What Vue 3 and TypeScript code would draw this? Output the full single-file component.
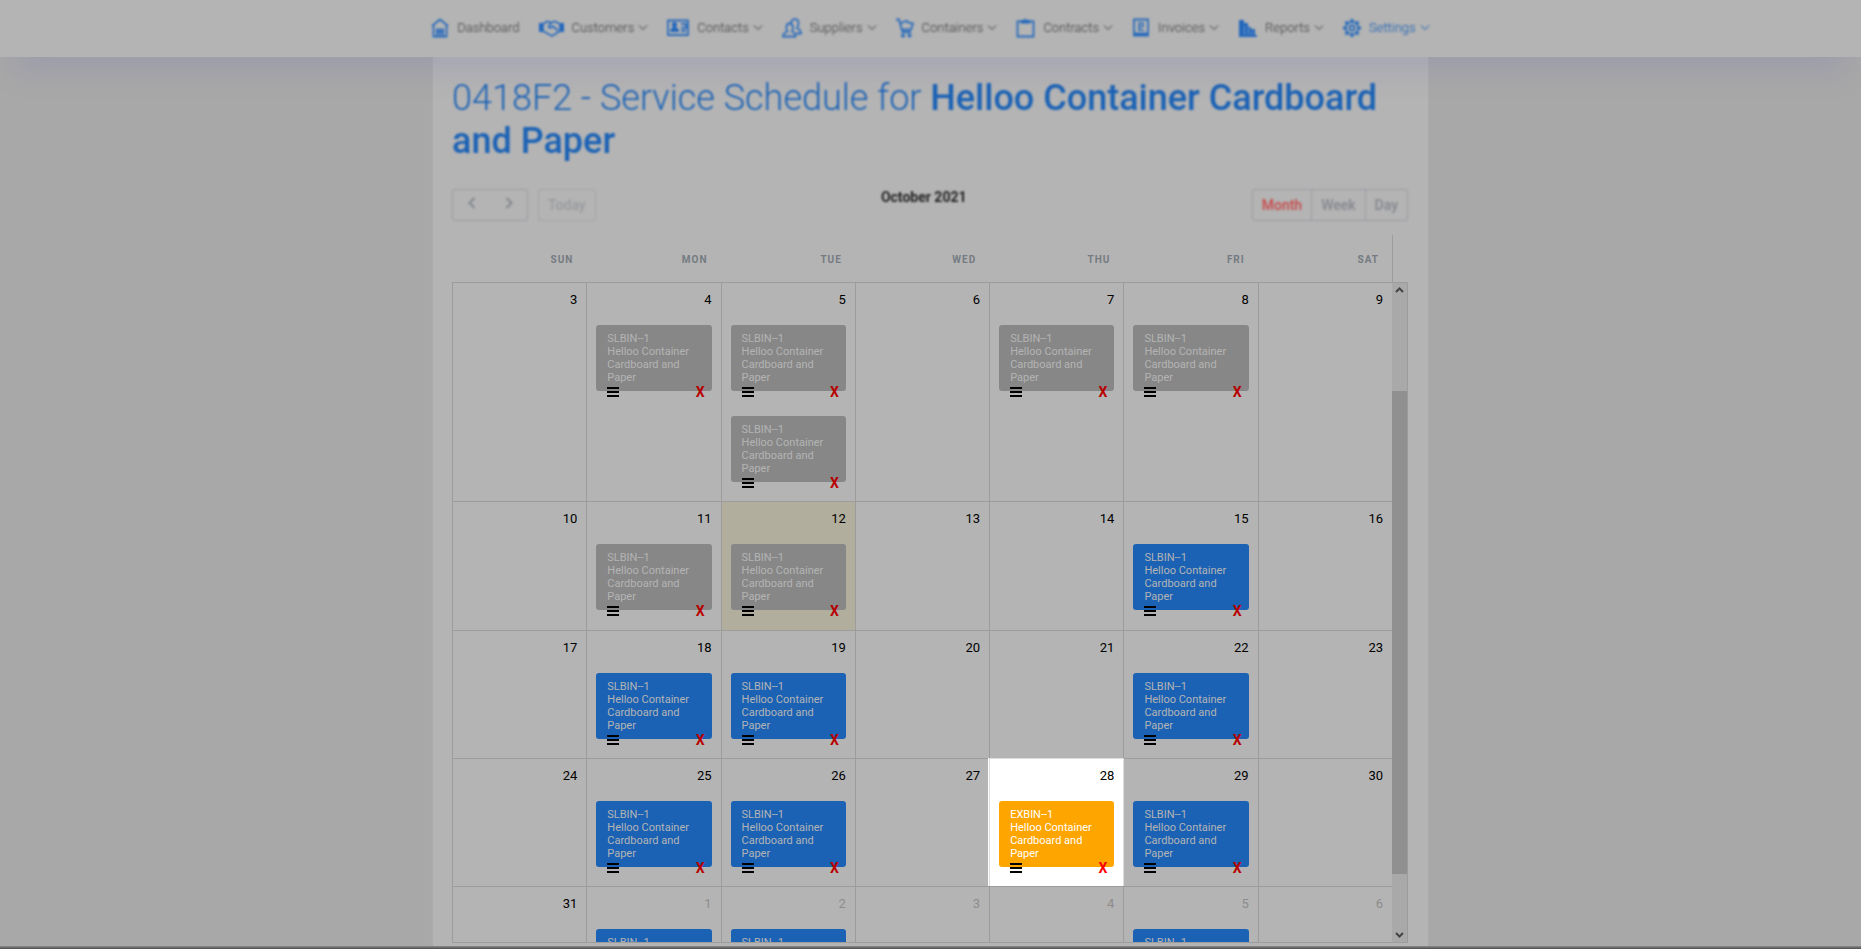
<script setup lang="ts">
interface NavItem { label: string; icon: string; menu: boolean; active?: boolean }
type Tone = 'past' | 'planned' | 'extra'
interface Day { num: number; events: Tone[]; today?: boolean; focus?: boolean; other?: boolean }

const nav: NavItem[] = [
  { label: 'Dashboard', icon: 'home', menu: false },
  { label: 'Customers', icon: 'hands', menu: true },
  { label: 'Contacts', icon: 'card', menu: true },
  { label: 'Suppliers', icon: 'people', menu: true },
  { label: 'Containers', icon: 'cart', menu: true },
  { label: 'Contracts', icon: 'clip', menu: true },
  { label: 'Invoices', icon: 'invoice', menu: true },
  { label: 'Reports', icon: 'chart', menu: true },
  { label: 'Settings', icon: 'gear', menu: true, active: true },
]

const weekdays = ['Sun', 'Mon', 'Tue', 'Wed', 'Thu', 'Fri', 'Sat']
const views = ['Month', 'Week', 'Day']

const day = (num: number, events: Tone[] = [], extra: Partial<Day> = {}): Day => ({ num, events, ...extra })
const other = { other: true }

const weeks: Day[][] = [
  [day(3), day(4, ['past']), day(5, ['past', 'past']), day(6), day(7, ['past']), day(8, ['past']), day(9)],
  [day(10), day(11, ['past']), day(12, ['past'], { today: true }), day(13), day(14), day(15, ['planned']), day(16)],
  [day(17), day(18, ['planned']), day(19, ['planned']), day(20), day(21), day(22, ['planned']), day(23)],
  [day(24), day(25, ['planned']), day(26, ['planned']), day(27), day(28, ['extra'], { focus: true }), day(29, ['planned']), day(30)],
  [day(31), day(1, ['planned'], other), day(2, ['planned'], other), day(3, [], other), day(4, [], other), day(5, ['planned'], other), day(6, [], other)],
]

const code = (tone: Tone): string => (tone === 'extra' ? 'EXBIN--1' : 'SLBIN--1')
</script>

<template>
  <div class="page">
    <header class="topbar">
      <nav class="menu">
        <a v-for="item in nav" :key="item.label" href="#" class="link" :class="{ active: item.active }">
          <svg v-if="item.icon === 'home'" class="icon" width="18" height="20" viewBox="0 0 18 20">
            <path d="M1 8 9 1.500 17 8M2.500 7v11.500h13V7M6 18.500v-7h6v7M6 14h6M9 14v4" />
          </svg>
          <svg v-else-if="item.icon === 'hands'" class="icon" width="25" height="20" viewBox="0 0 25 20">
            <path class="solid" d="M0 5h4v9H0zM21 5h4v9h-4z" />
            <path d="M4 6l4-2.500 4 1 4-1 5 2.500v7l-8 5-9-5zM12 5 9.500 9c1 1.500 3 1 4.500-.8l5 4.300" />
          </svg>
          <svg v-else-if="item.icon === 'card'" class="icon" width="22" height="20" viewBox="0 0 22 20">
            <path d="M1 2.500h20v14.500H1z" />
            <path class="solid" d="M3 14c0-3 1.500-4 3-4.500C4 7 5 4 7.500 4S11 7 9 9.500c2 .5 3 1.500 3 4.500z" />
            <path d="M14 6h5v4h-5M14 13h5" />
          </svg>
          <svg v-else-if="item.icon === 'people'" class="icon" width="20" height="20" viewBox="0 0 20 20">
            <path d="M1 18.500c0-3 1.500-4 4.500-5C3.500 10 4 5.500 7.500 5.500S12 10 10 13.500c2.500 1 3.500 2 3.500 5zM9 5c.5-3 2-3.800 4-3.800 4 0 4.500 5 2 8.800 3 1.500 4 2.500 4 5.500h-5" />
          </svg>
          <svg v-else-if="item.icon === 'cart'" class="icon" width="18" height="20" viewBox="0 0 18 20">
            <path d="M0 1.500h3L6.500 14H15M4 6l4-2.500 3-.5 2 2 4 .5-2 6H6" />
            <circle cx="7" cy="17.500" r="1.200" /><circle cx="13.500" cy="17.500" r="1.200" />
          </svg>
          <svg v-else-if="item.icon === 'clip'" class="icon" width="19" height="20" viewBox="0 0 19 20">
            <path d="M1.500 3.500h16v15h-16z" /><path class="solid" d="M5 2h3l1.500-1.500L11 2h3v3.500H5z" />
          </svg>
          <svg v-else-if="item.icon === 'invoice'" class="icon" width="18" height="20" viewBox="0 0 18 20">
            <path d="M2 1.500h14v16H2zM2 15.500h14" /><path class="fine" d="M7 12V5h4v3.500H7M6 12h6" />
          </svg>
          <svg v-else-if="item.icon === 'chart'" class="icon" width="19" height="20" viewBox="0 0 19 20">
            <path class="solid" d="M1 2h5v3h4v4h3v2h4v6h2v2H1z" /><path class="gap" d="M6.500 8v9M10.500 10v7M14 13v4" />
          </svg>
          <svg v-else class="icon" width="18" height="20" viewBox="0 0 18 20">
            <circle cx="9" cy="10" r="6.200" /><circle cx="9" cy="10" r="2.500" />
            <path class="thick" d="M9 1v3M9 16v3M0 10h3M15 10h3M2.600 3.600l2 2M13.400 14.400l2 2M15.400 3.600l-2 2M4.600 14.400l-2 2" />
          </svg>
          <span>{{ item.label }}</span>
          <svg v-if="item.menu" class="chevron" width="10" height="8" viewBox="0 0 10 8"><path d="M1 1.500 5 5.500 9 1.500" /></svg>
        </a>
      </nav>
    </header>

    <main class="panel">
      <div class="heading">
        <h1>0418F2 - Service Schedule for <strong>Helloo Container Cardboard and Paper</strong></h1>
        <div class="toolbar">
          <div class="left">
            <div class="group arrows">
              <button type="button" aria-label="Previous"><svg width="8" height="12" viewBox="0 0 8 12"><path d="M6.500 1 1.500 6l5 5" /></svg></button>
              <button type="button" aria-label="Next"><svg width="8" height="12" viewBox="0 0 8 12"><path d="M1.500 1l5 5-5 5" /></svg></button>
            </div>
            <button type="button" class="today-btn" disabled>Today</button>
          </div>
          <h2>October 2021</h2>
          <div class="group views">
            <button v-for="(view, i) in views" :key="view" type="button" :class="{ current: i === 0 }">{{ view }}</button>
          </div>
        </div>
      </div>

      <div class="weekdays">
        <span v-for="name in weekdays" :key="name">{{ name }}</span>
      </div>

      <div class="scroller">
        <div class="viewport">
          <table>
            <tbody>
              <tr v-for="(week, w) in weeks" :key="w">
                <td v-for="(d, i) in week" :key="i" :class="{ today: d.today, focus: d.focus, other: d.other }">
                  <div class="num">{{ d.num }}</div>
                  <div class="events">
                    <div v-for="(tone, e) in d.events" :key="e" class="event">
                      <div class="box" :class="tone">{{ code(tone) }}<br />Helloo Container Cardboard and Paper</div>
                      <div class="actions">
                        <button type="button" aria-label="Event menu">
                          <svg width="12" height="10" viewBox="0 0 12 10"><path d="M0 0h12v2H0zM0 4h12v2H0zM0 8h12v2H0z" /></svg>
                        </button>
                        <button type="button" class="remove">X</button>
                      </div>
                    </div>
                  </div>
                </td>
              </tr>
            </tbody>
          </table>
        </div>
        <div class="scrollbar">
          <svg width="15" height="16" viewBox="0 0 15 16"><path d="M4 9l3.500-3.500L11 9" /></svg>
          <div class="track"><div class="before"></div><div class="thumb"></div><div class="after"></div></div>
          <svg width="15" height="16" viewBox="0 0 15 16"><path d="M4 7l3.500 3.500L11 7" /></svg>
        </div>
      </div>
    </main>
    <div class="edge"></div>
  </div>
</template>

<style>
body { margin: 0; background: #a8a8a8; }
</style>

<style scoped>
* { box-sizing: border-box; }
.page {
  height: 100vh; display: flex; flex-direction: column; overflow: hidden;
  background: #a8a8a8; color: #000; font-family: Roboto, "Liberation Sans", sans-serif;
}
button { font: inherit; color: inherit; background: none; border: 0; padding: 0; margin: 0; display: flex; align-items: center; justify-content: center; }

.topbar {
  flex: none; height: 57px; background: #b4b4b4; position: relative; z-index: 2;
  display: flex; justify-content: center; box-shadow: 0 26px 30px -15px rgba(112, 112, 183, .26);
}
.menu { display: flex; align-items: center; gap: 19px; height: 55px; filter: blur(1px); }
.link { display: flex; align-items: center; color: #3c3c3c; font-size: 13px; line-height: 20px; font-weight: 300; text-decoration: none; }
.link.active { color: #0b58b5; }
.icon { margin-right: 8px; fill: none; stroke: #2a6cbc; stroke-width: 1.8; }
.icon .solid { fill: #2468bc; stroke: none; }
.icon .gap { stroke: #6f97c6; stroke-width: 1; }
.icon .fine { stroke-width: 1.5; }
.icon .thick { stroke-width: 3; }
.chevron { margin-left: 4px; fill: none; stroke: currentColor; stroke-width: 1; }

.panel {
  flex: 1; min-height: 0; width: calc(100% - 40px); max-width: 995px; margin: 0 auto; padding: 20px 20px 3px 19px;
  background: #b4b4b4; display: flex; flex-direction: column; box-shadow: 0 0 3px #b0b0b0;
}
.heading { filter: blur(1px); }
h1 { margin: 0; font-size: 36px; line-height: 43px; font-weight: 300; color: #1b62b5; }
h1 strong { font-weight: 500; }
.toolbar { display: flex; justify-content: space-between; margin-top: 26px; height: 46px; align-items: flex-start; font-size: 14px; font-weight: 500; color: #83878d; }
.left { display: flex; gap: 10px; }
.group { display: flex; height: 32px; border: 1px solid #9a9ca3; border-radius: 3px; }
.arrows button { width: 37px; }
.arrows svg { fill: none; stroke: #83878d; stroke-width: 2; margin-bottom: 4px; }
.today-btn { height: 32px; padding: 0 9px; border: 1px solid #a3a4a8; border-radius: 3px; color: #989a9e; }
.views button { padding: 0 9px; }
.views button + button { border-left: 1px solid #9a9ca3; }
.views .current { color: #c84848; }
h2 { margin: 0; font-size: 14px; line-height: 16px; font-weight: 700; color: #222; }

.weekdays {
  display: grid; grid-template-columns: repeat(7, 1fr); height: 47px; margin-right: 15px; padding-top: 2px; border-right: 1px solid #9c9c9c;
  align-items: center; text-align: right; text-transform: uppercase; font-size: 10px; line-height: 14px; font-weight: 700; letter-spacing: 1px; color: #757b82;
}
.weekdays span { padding-right: 13px; }

.scroller { flex: 1; min-height: 0; overflow: hidden; display: flex; align-items: stretch; border: solid #9c9c9c; border-width: 1px 1px 1px 0; }
.viewport { flex: 1; min-width: 0; overflow: hidden; }
table { width: 100%; border-collapse: separate; border-spacing: 0; table-layout: fixed; }
td { padding: 0; vertical-align: top; border-left: 1px solid #9c9c9c; }
tr + tr td { border-top: 1px solid #9c9c9c; }
.num { padding: 7px 9px 0 0; height: 42px; font-size: 13px; line-height: 20px; text-align: right; }
.other .num { color: #8c8c8c; }
.today { background: #b1ae9d; padding-bottom: 1px; }
.events { display: flex; flex-direction: column; gap: 6px; padding: 0 9px; }
.box { padding: 7px 11px; border-radius: 3px; font-size: 11px; line-height: 13px; color: #b4b4b4; }
.past { background: #878787; }
.planned { background: #1b62b5; }
.extra { background: #ffa500; color: #fff; }
.actions { display: flex; justify-content: space-between; height: 12px; margin: -5px 7px 12px 11px; }
.actions svg { display: block; fill: #000; }
.remove { font-size: 14px; line-height: 12px; font-weight: 700; color: #b80000; }
tr + tr td.focus { position: relative; background: #fff; border-color: #ddd; box-shadow: -1px 0 #fff, 1px 0 #ddd; }
.focus .remove { color: #f00; }

.scrollbar { flex: none; width: 15px; background: #a9a9a9; display: flex; flex-direction: column; }
.scrollbar svg { flex: none; fill: none; stroke: #444; stroke-width: 2; }
.track { flex: 1; display: flex; flex-direction: column; }
.before { flex: 92; }
.thumb { flex: 483; background: #909090; }
.after { flex: 52; }
.edge { flex: none; height: 3px; background: linear-gradient(#8c8c8c, #4e4c4e); }
</style>
